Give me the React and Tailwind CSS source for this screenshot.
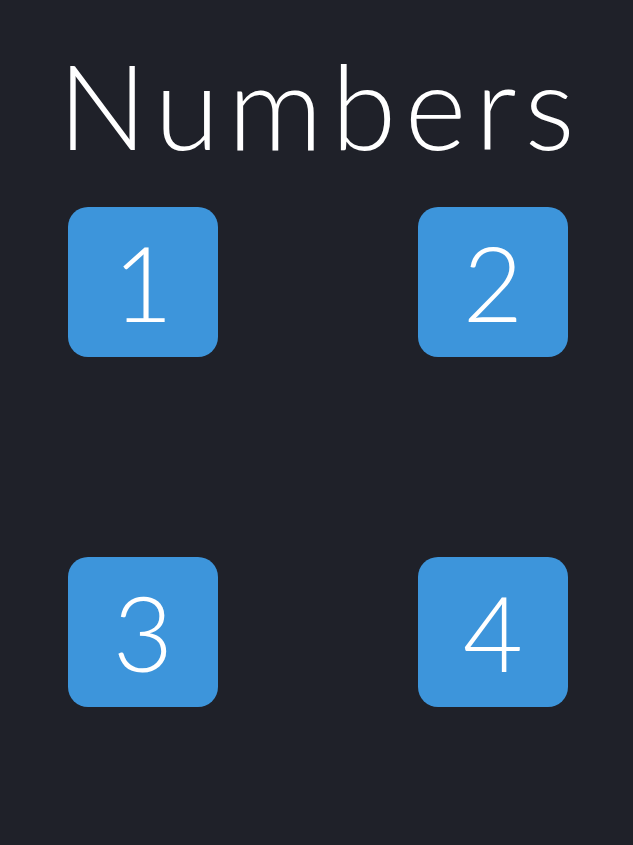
export default function App() {
  const nums = [1, 2, 3, 4];
  return (
    <div className="w-[633px] h-[845px] bg-[#1f2129] overflow-hidden" style={{ fontFamily: "Lato, 'Noto Sans', sans-serif" }}>
      <h1 className="text-white text-[118px] font-light leading-none text-center pt-[46px] tracking-[8.5px] pl-[8px]">Numbers</h1>
      <div className="grid grid-cols-[150px_150px] gap-x-[200px] gap-y-[200px] ml-[68px] mt-[43px]">
        {nums.map((n) => (
          <div key={n} className="w-[150px] h-[150px] rounded-[20px] bg-[#3d95db] flex items-center justify-center text-white text-[104px] font-light leading-none">
            {n}
          </div>
        ))}
      </div>
    </div>
  );
}
